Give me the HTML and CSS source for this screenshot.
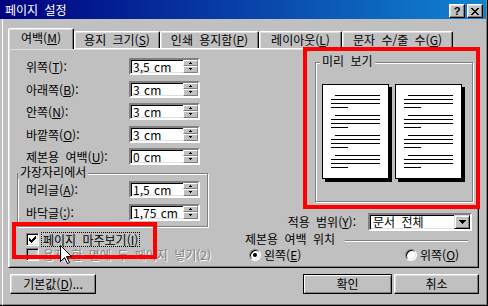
FILE: index.html
```html
<!DOCTYPE html>
<html lang="ko">
<head>
    <meta charset="UTF-8">
    <title>페이지 설정</title>
    <link rel="stylesheet" href="styles.css">
</head>
<body>
<div class="window">
    <div class="titlebar">
        <span class="title">페이지 설정</span>
        <div class="caption-buttons">
            <span class="cap-btn help">?</span>
            <span class="cap-btn">
                <svg width="8" height="7" viewBox="0 0 8 7" shape-rendering="crispEdges"><path d="M0 0h2v1H0zM6 0h2v1H6zM1 1h2v1H1zM5 1h2v1H5zM2 2h4v1H2zM3 3h2v1H3zM2 4h4v1H2zM1 5h2v1H1zM5 5h2v1H5zM0 6h2v1H0zM6 6h2v1H6z" fill="#000"/></svg>
            </span>
        </div>
    </div>

    <div class="main">
        <div class="tabs">
            <div class="tab t1 active">여백(<u>M</u>)</div>
            <div class="tab t2">용지 크기(<u>S</u>)</div>
            <div class="tab t3">인쇄 용지함(<u>P</u>)</div>
            <div class="tab t4">레이아웃(<u>L</u>)</div>
            <div class="tab t5">문자 수/줄 수(<u>G</u>)</div>
        </div>

        <div class="panel">
            <div class="col-left">
                <div class="field">
                    <span class="label">위쪽(<u>T</u>):</span>
                    <div class="spin"><span class="value">3,5 cm</span><div class="spinner"><i class="up"></i><i class="down"></i></div></div>
                </div>
                <div class="field gap6">
                    <span class="label">아래쪽(<u>B</u>):</span>
                    <div class="spin"><span class="value">3 cm</span><div class="spinner"><i class="up"></i><i class="down"></i></div></div>
                </div>
                <div class="field">
                    <span class="label">안쪽(<u>N</u>):</span>
                    <div class="spin"><span class="value">3 cm</span><div class="spinner"><i class="up"></i><i class="down"></i></div></div>
                </div>
                <div class="field gap6">
                    <span class="label">바깥쪽(<u>O</u>):</span>
                    <div class="spin"><span class="value">3 cm</span><div class="spinner"><i class="up"></i><i class="down"></i></div></div>
                </div>
                <div class="field">
                    <span class="label">제본용 여백(<u>U</u>):</span>
                    <div class="spin"><span class="value">0 cm</span><div class="spinner"><i class="up"></i><i class="down"></i></div></div>
                </div>

                <div class="group edges">
                    <div class="group-title">가장자리에서</div>
                    <div class="field">
                        <span class="label">머리글(<u>A</u>):</span>
                        <div class="spin"><span class="value">1,5 cm</span><div class="spinner"><i class="up"></i><i class="down"></i></div></div>
                    </div>
                    <div class="field gap6">
                        <span class="label">바닥글(<u>:</u>):</span>
                        <div class="spin"><span class="value">1,75 cm</span><div class="spinner"><i class="up"></i><i class="down"></i></div></div>
                    </div>
                </div>

                <div class="check">
                    <span class="box">
                        <svg width="7" height="7" viewBox="0 0 7 7" shape-rendering="crispEdges"><path d="M6 0h1v1H6zM5 1h2v1H5zM0 2h1v1H0zM4 2h3v1H4zM0 3h2v1H0zM3 3h3v1H3zM0 4h5v1H0zM1 5h3v1H1zM2 6h1v1H2z" fill="#000"/></svg>
                    </span>
                    <span class="focus">페이지 마주보기(<u>I</u>)</span>
                </div>
                <div class="check disabled">
                    <span class="box"></span>
                    <span class="text">용지 한 면에 두 페이지 넣기(2)</span>
                </div>
            </div>

            <div class="col-right">
                <div class="group preview">
                    <div class="group-title">미리 보기</div>
                    <div class="pages">
                        <div class="page">
                            <div class="para"><i></i><i></i><i></i><i class="last"></i></div>
                            <div class="para"><i></i><i></i><i></i><i class="last"></i></div>
                            <div class="para"><i></i><i></i><i></i><i class="last"></i></div>
                            <div class="para"><i></i><i></i><i></i><i class="last"></i></div>
                        </div>
                        <div class="page">
                            <div class="para"><i></i><i></i><i></i><i class="last"></i></div>
                            <div class="para"><i></i><i></i><i></i><i class="last"></i></div>
                            <div class="para"><i></i><i></i><i></i><i class="last"></i></div>
                            <div class="para"><i></i><i></i><i></i><i class="last"></i></div>
                        </div>
                    </div>
                </div>

                <div class="apply-row">
                    <span class="label">적용 범위(<u>Y</u>):</span>
                    <div class="combo">
                        <span class="value">문서 전체</span>
                        <span class="drop">
                            <svg width="7" height="4" viewBox="0 0 7 4" shape-rendering="crispEdges"><path d="M0 0h7v1H0zM1 1h5v1H1zM2 2h3v1H2zM3 3h1v1H3z" fill="#000"/></svg>
                        </span>
                    </div>
                </div>

                <div class="binding-title">
                    <span>제본용 여백 위치</span>
                    <span class="etch"></span>
                </div>
                <div class="radios">
                    <div class="option first"><span class="radio checked"></span>왼쪽(<u>E</u>)</div>
                    <div class="option"><span class="radio"></span>위쪽(<u>O</u>)</div>
                </div>
            </div>
        </div>

        <div class="buttons">
            <div class="btn reset">기본값(<u>D</u>)...</div>
            <div class="right">
                <div class="btn ok">확인</div>
                <div class="btn cancel">취소</div>
            </div>
        </div>
    </div>

    <!-- red marks drawn over the dialog -->
    <div class="mark mark-preview"></div>
    <div class="mark mark-check"></div>

    <svg class="cursor" width="12" height="20" viewBox="0 0 12 20"><path d="M0.5 0.5V16.5L4.5 12.5L7.5 18.5L9.5 17.5L6.5 11.5H11.5Z" fill="#fff" stroke="#000"/></svg>
</div>
</body>
</html>
```

FILE: styles.css
```css
* {
    box-sizing: border-box;
}
body {
    margin: 0;
    background: #c0c0c0;
    font-family: "Noto Sans CJK KR", "Noto Sans", sans-serif;
    font-size: 12px;
    line-height: 14px;
    word-spacing: 3px;
    color: #000;
}
u {
    text-decoration-thickness: 1px;
}
.window {
    position: relative;
    width: 488px;
    height: 306px;
    background: #c0c0c0;
    border-right: 1px solid #000;
    border-bottom: 1px solid #000;
    box-shadow: inset -1px -1px #808080;
    overflow: hidden;
}

/* title bar */
.titlebar {
    display: flex;
    justify-content: space-between;
    height: 19px;
    margin-right: 1px;
    padding: 0 3px 0 5px;
    background: linear-gradient(to right, #000080, #1084d0);
    color: #fff;
}
.title {
    line-height: 19px;
}
.caption-buttons {
    display: flex;
    gap: 2px;
    align-self: flex-end;
    margin-bottom: 1px;
}
.cap-btn {
    display: flex;
    align-items: center;
    justify-content: center;
    width: 16px;
    height: 14px;
    background: #c0c0c0;
    border: 1px solid;
    border-color: #fff #000 #000 #fff;
    box-shadow: inset -1px -1px #808080, inset 1px 1px #dfdfdf;
    color: #000;
}
.cap-btn.help {
    font: bold 11px/1 "Liberation Sans", sans-serif;
}

.main {
    margin-left: 2px;
    border-left: 1px solid #fff;
    padding: 9px 8px 0 5px;
    height: 286px;
}

/* tabs */
.tabs {
    display: flex;
    align-items: flex-end;
    height: 20px;
}
.tab {
    height: 17px;
    border: 1px solid;
    border-bottom: 0;
    border-color: #fff #000 transparent #fff;
    border-radius: 2px 2px 0 0;
    box-shadow: inset -1px 0 #808080, inset 1px 1px #dfdfdf;
    text-align: center;
    line-height: 16px;
}
.tab.active {
    position: relative;
    z-index: 1;
    height: 21px;
    margin-bottom: -1px;
    background: #c0c0c0;
    line-height: 18px;
}
.t1 { width: 66px; }
.t2 { width: 86px; }
.t3 { width: 99px; }
.t4 { width: 83px; }
.t5 { width: 111px; }

.panel {
    display: flex;
    height: 220px;
    border: 1px solid;
    border-color: #fff #000 #000 #fff;
    box-shadow: inset 1px 1px #dfdfdf, inset -1px -1px #808080;
}

/* left column */
.col-left {
    width: 232px;
    padding: 9px 0 0 8px;
}
.field {
    display: flex;
    align-items: center;
    height: 17px;
    padding-left: 9px;
}
.field + .field {
    margin-top: 5px;
}
.field.gap6 {
    margin-top: 6px;
}
.field .label {
    width: 103px;
}
.spin {
    display: flex;
    justify-content: space-between;
    width: 71px;
    height: 17px;
    background: #fff;
    border: 2px solid;
    border-color: #808080 #fff #fff #808080;
    box-shadow: inset 1px 1px #000, inset -1px -1px #dfdfdf;
}
.spin .value {
    padding-left: 2px;
    line-height: 13px;
    word-spacing: 1px;
}
.spinner {
    display: flex;
    flex-direction: column;
    width: 15px;
}
.spinner i {
    display: flex;
    align-items: center;
    justify-content: center;
    height: 6px;
    background: #c0c0c0;
    border: 1px solid;
    border-color: #fff #808080 #808080 #fff;
}
.spinner i.down {
    height: 7px;
}
.spinner i::after {
    content: "";
    width: 1px;
    height: 1px;
    background: #000;
}
.spinner i.up::after {
    margin-top: -1px;
    box-shadow: -1px 1px #000, 0 1px #000, 1px 1px #000;
}
.spinner i.down::after {
    margin-top: -2px;
    box-shadow: -1px -1px #000, 0 -1px #000, 1px -1px #000;
    transform: translateY(1px);
}

/* etched group boxes */
.group {
    border: 1px solid #808080;
    box-shadow: inset 1px 1px #fff, 1px 1px #fff;
}
.group-title {
    width: fit-content;
    height: 14px;
    margin-top: -9px;
    padding: 0 2px;
    background: #c0c0c0;
}
.edges {
    width: 191px;
    margin-top: 8px;
    padding-bottom: 5px;
}
.edges .field {
    padding-left: 8px;
}
.edges .group-title + .field {
    margin-top: 2px;
}

/* check boxes */
.check {
    display: flex;
    align-items: center;
    height: 15px;
    padding-left: 9px;
}
.edges + .check {
    margin-top: 5px;
}
.box {
    display: flex;
    align-items: center;
    justify-content: center;
    width: 13px;
    height: 13px;
    background: #fff;
    border: 1px solid;
    border-color: #808080 #fff #fff #808080;
    box-shadow: inset 1px 1px #000, inset -1px -1px #dfdfdf;
}
.focus {
    margin-left: 2px;
    padding: 0 1px;
    border: 1px dotted #000;
    line-height: 13px;
}
.check.disabled .box {
    background: #c0c0c0;
}
.check.disabled .text {
    margin-left: 4px;
    color: #808080;
    text-shadow: 1px 1px #fff;
}

/* right column */
.col-right {
    width: 236px;
}
.preview {
    width: 158px;
    height: 140px;
    margin: 13px 0 0 74px;
}
.preview .group-title {
    margin-left: 4px;
}
.pages {
    display: flex;
    gap: 6px;
    margin-top: 16px;
    padding-left: 6px;
}
.page {
    width: 67px;
    height: 95px;
    padding: 10px 0 0 8px;
    background: #fff;
    border: 1px solid #000;
    box-shadow: 3px 3px 0 #000;
}
.para + .para {
    margin-top: 7px;
}
.para i {
    display: block;
    width: 49px;
    height: 1px;
    margin-top: 3px;
    background: #000;
}
.para i:first-child {
    width: 45px;
    margin-top: 0;
    margin-left: 4px;
}
.para i.last {
    width: 17px;
}

.apply-row {
    display: flex;
    align-items: center;
    justify-content: flex-end;
    height: 18px;
    margin-top: 11px;
    padding-right: 5px;
}
.apply-row .label {
    margin-right: 12px;
}
.combo {
    display: flex;
    justify-content: space-between;
    width: 104px;
    height: 18px;
    background: #fff;
    border: 2px solid;
    border-color: #808080 #fff #fff #808080;
    box-shadow: inset 1px 1px #000, inset -1px -1px #dfdfdf;
}
.combo .value {
    padding-left: 3px;
    line-height: 14px;
}
.drop {
    display: flex;
    align-items: center;
    justify-content: center;
    width: 16px;
    height: 14px;
    background: #c0c0c0;
    border: 1px solid;
    border-color: #dfdfdf #000 #000 #dfdfdf;
    box-shadow: inset 1px 1px #fff, inset -1px -1px #808080;
}

.binding-title {
    display: flex;
    height: 14px;
    margin-top: 1px;
    padding-left: 4px;
}
.etch {
    width: 123px;
    height: 2px;
    margin: 8px 9px 0 auto;
    border-top: 1px solid #808080;
    border-bottom: 1px solid #fff;
}
.radios {
    display: flex;
    height: 14px;
    margin-top: 2px;
    padding-left: 8px;
}
.option {
    display: flex;
    align-items: center;
}
.option.first {
    width: 156px;
}
.radio {
    display: flex;
    align-items: center;
    justify-content: center;
    width: 12px;
    height: 12px;
    margin-right: 3px;
    background: #fff;
    border: 1px solid;
    border-color: #808080 #fff #fff #808080;
    border-radius: 50%;
    box-shadow: inset 1px 1px #000, inset -1px -1px #dfdfdf;
}
.radio.checked::after {
    content: "";
    width: 4px;
    height: 4px;
    border-radius: 50%;
    background: #000;
}

/* bottom buttons */
.buttons {
    display: flex;
    justify-content: space-between;
    margin-top: 6px;
    padding-left: 2px;
}
.right {
    display: flex;
    gap: 2px;
}
.btn {
    height: 20px;
    line-height: 18px;
    text-align: center;
    background: #c0c0c0;
    border: 1px solid;
    border-color: #fff #000 #000 #fff;
    box-shadow: inset -1px -1px #808080, inset 1px 1px #dfdfdf;
}
.reset { width: 86px; }
.ok {
    width: 89px;
    border-color: #000;
    box-shadow: inset 1px 1px #fff, inset -1px -1px #808080;
}
.cancel { width: 85px; }

/* annotations */
.mark {
    position: absolute;
    border: 4px solid #f00;
}
.mark-preview {
    left: 303px;
    top: 47px;
    width: 177px;
    height: 162px;
}
.mark-check {
    left: 12px;
    top: 222px;
    width: 145px;
    height: 37px;
}
.cursor {
    position: absolute;
    left: 60px;
    top: 245px;
}
```
